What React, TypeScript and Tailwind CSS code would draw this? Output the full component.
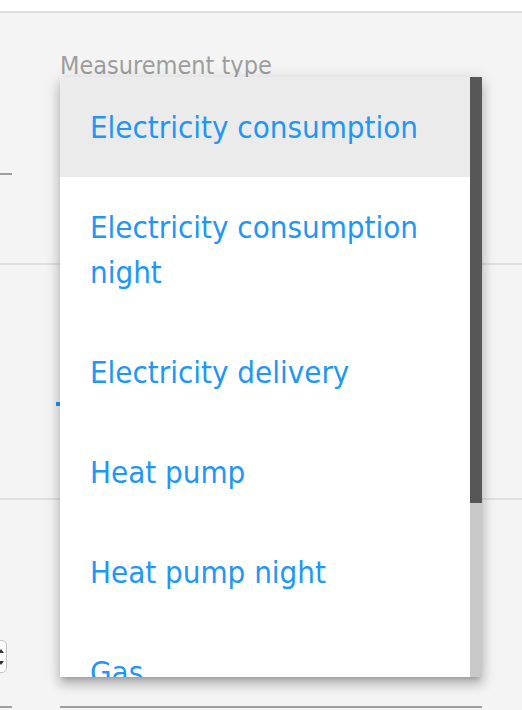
import React from "react";

const items = [
    "Electricity consumption",
    "Electricity consumption night",
    "Electricity delivery",
    "Heat pump",
    "Heat pump night",
    "Gas",
    "Water",
];

const MeasurementMenu = () => {
    return (
        <div className="absolute left-[60px] top-[77px] w-[422px] h-[600px] flex bg-white shadow-[0_5px_5px_-3px_rgba(0,0,0,0.2),0_8px_10px_1px_rgba(0,0,0,0.14),0_3px_14px_2px_rgba(0,0,0,0.12)]">
            <ul className="flex-1 overflow-hidden">
                {items.map((item, i) => (
                    <li
                        key={item}
                        className={
                            i === 0
                                ? "pl-[30px] pr-[30px] py-[27.5px] text-[31px] leading-[45px] text-[#2196f3] bg-[#ebebeb]"
                                : "pl-[30px] pr-[30px] py-[27.5px] text-[31px] leading-[45px] text-[#2196f3]"
                        }
                    >
                        {item}
                    </li>
                ))}
            </ul>
            <div className="w-[12px] flex flex-col bg-[#c9c9c9]">
                <div className="h-[426px] bg-[#575757]"></div>
            </div>
        </div>
    );
};

const App = () => {
    return (
        <div className="relative w-[522px] h-[710px] overflow-hidden bg-white font-['DejaVu_Sans_Condensed','DejaVu_Sans',sans-serif]">
            <div className="h-[11px] bg-white"></div>
            <div className="bg-[#f4f4f4] border-t-2 border-[#dcdcdc]">
                {/* first row: select field */}
                <div className="h-[252px] flex border-b-2 border-[#e0e0e0]">
                    <div className="w-[12px]">
                        <div className="mt-[160px] h-[2px] bg-[#9e9e9e]"></div>
                    </div>
                    <div className="ml-[48px] pt-[41px] text-[25px] leading-[24px] text-[#9e9e9e]">
                        Measurement type
                    </div>
                </div>

                {/* second row */}
                <div className="h-[235px] flex flex-col border-b-2 border-[#e0e0e0]">
                    <div className="ml-[56px] mt-[137px] w-[5px] h-[4px] bg-[#2196f3]"></div>
                </div>

                {/* third row */}
                <div className="h-[210px] flex">
                    <div className="w-[12px] flex flex-col">
                        <div className="mt-[140px] -ml-[10px] w-[17px] h-[33px] rounded-[5px] border border-[#c4c4c4] bg-white flex items-center justify-end pr-[2px]">
                            <svg width="6" height="20" viewBox="0 0 6 20">
                                <polygon points="0,6 3,2 6,6" fill="#333" />
                                <polygon points="0,14 3,18 6,14" fill="#333" />
                            </svg>
                        </div>
                        <div className="mt-[33px] h-[2px] bg-[#9e9e9e]"></div>
                    </div>
                    <div className="ml-[48px] w-[422px] flex flex-col">
                        <div className="mt-[206px] h-[2px] bg-[#9e9e9e]"></div>
                    </div>
                </div>
            </div>

            <MeasurementMenu />
        </div>
    );
};

export default App;
